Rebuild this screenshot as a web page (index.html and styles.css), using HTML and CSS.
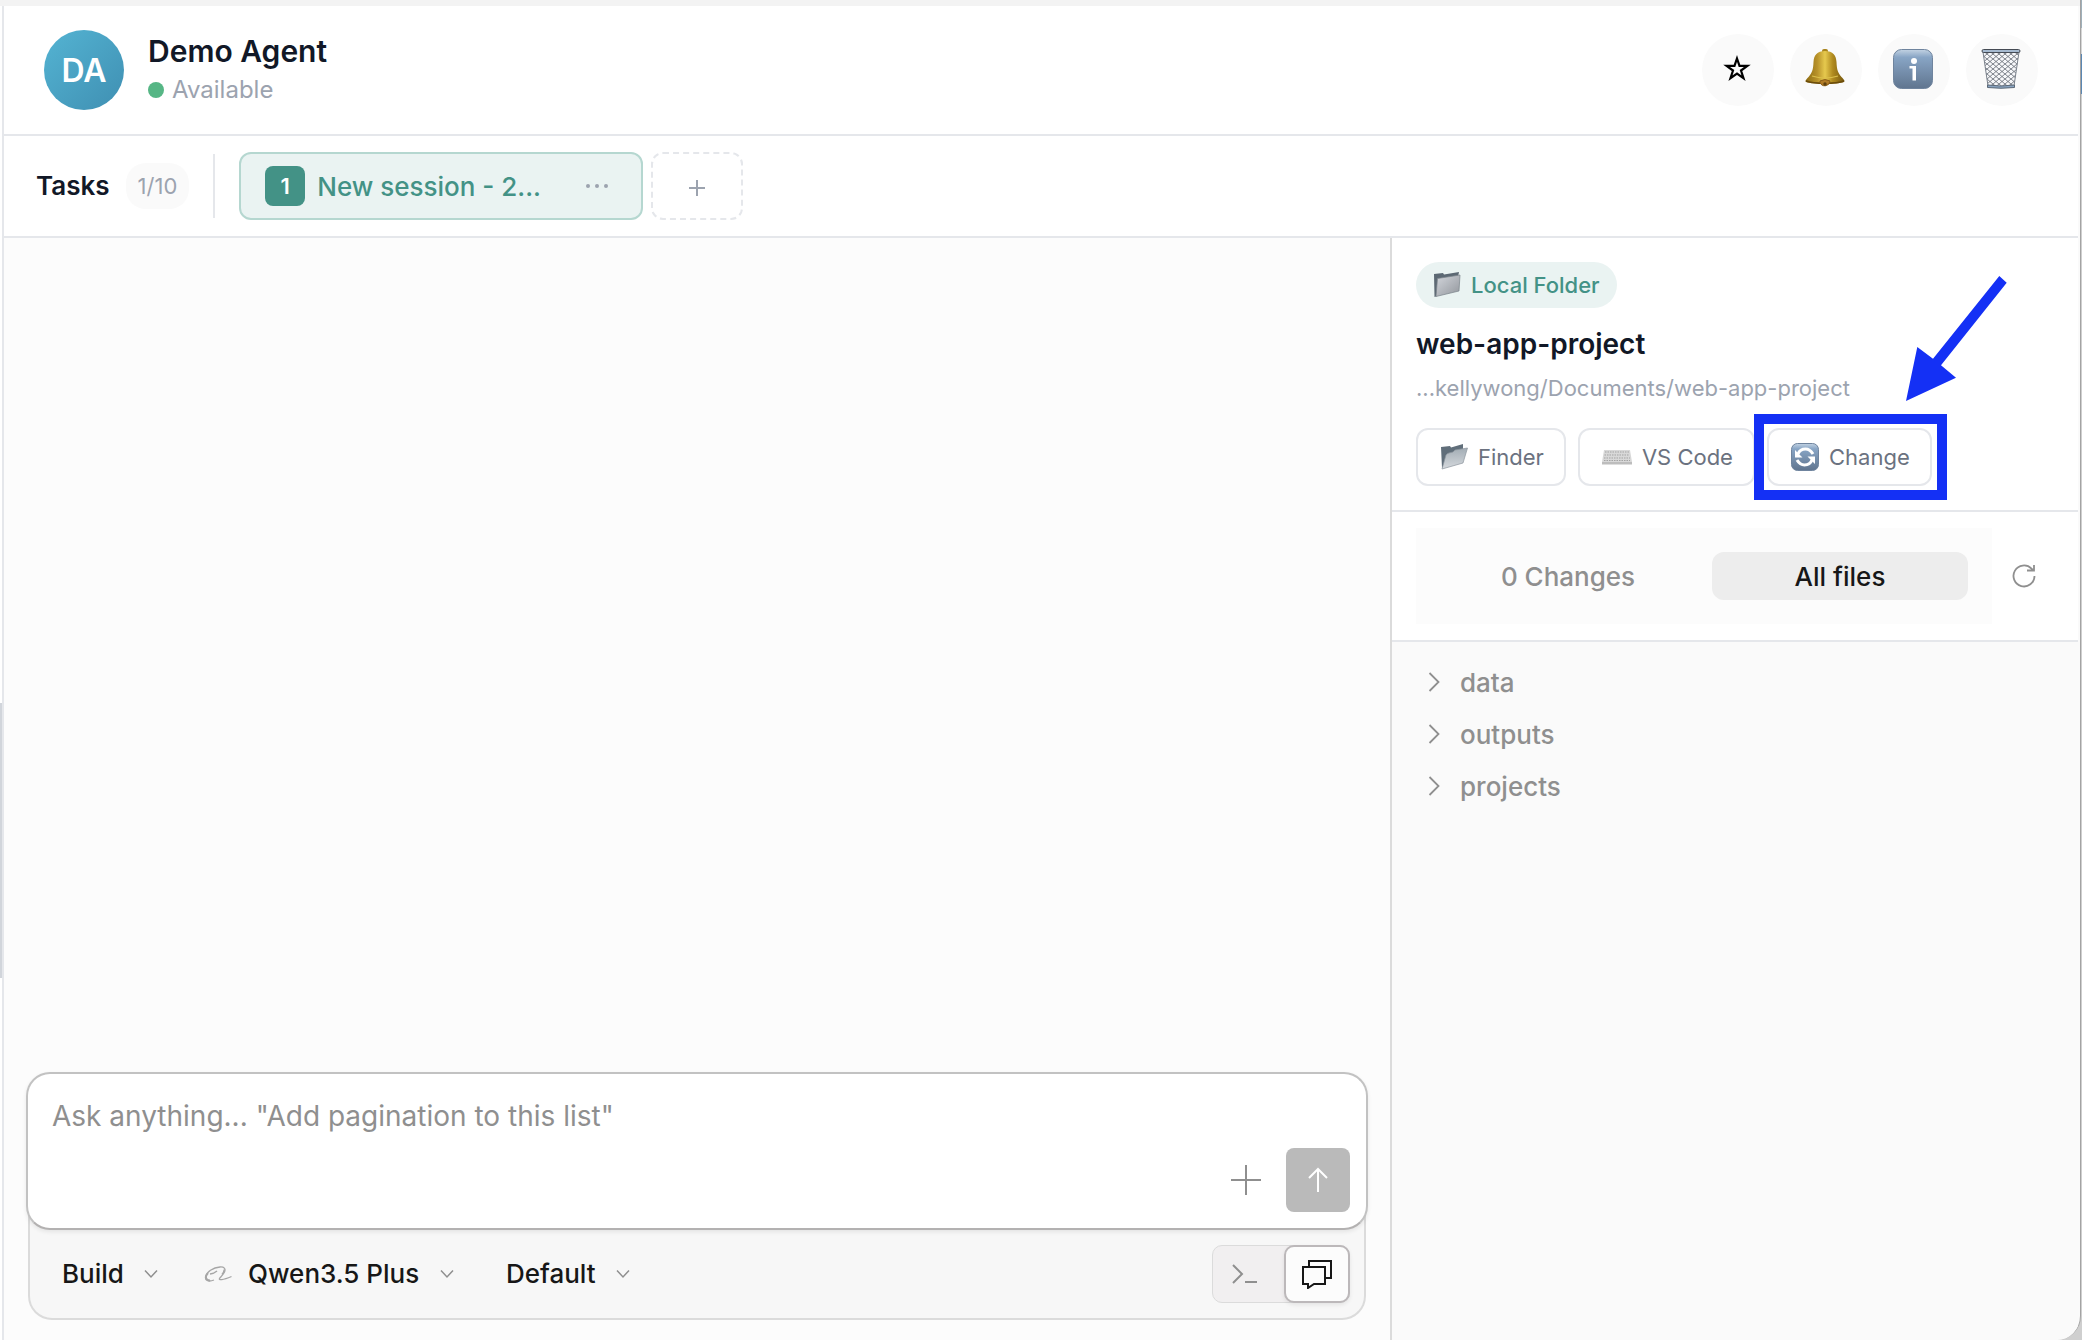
FILE: index.html
```html
<!DOCTYPE html>
<html lang="en">
<head>
    <meta charset="UTF-8">
    <meta name="viewport" content="width=device-width, initial-scale=1.0">
    <title>Demo Agent</title>
    <link rel="stylesheet" href="styles.css">
</head>
<body>
    <!-- shared icons -->
    <svg class="sprite" aria-hidden="true">
        <defs>
            <linearGradient id="steel" x1="0" y1="0" x2="0" y2="1">
                <stop offset="0" stop-color="#c3d3e3"/>
                <stop offset="0.2" stop-color="#88a5c5"/>
                <stop offset="1" stop-color="#60758f"/>
            </linearGradient>
            <linearGradient id="gold" x1="0" y1="0" x2="1" y2="0">
                <stop offset="0" stop-color="#8d6c12"/>
                <stop offset="0.3" stop-color="#b8922a"/>
                <stop offset="0.5" stop-color="#e6c94e"/>
                <stop offset="0.7" stop-color="#b08a1f"/>
                <stop offset="1" stop-color="#76570d"/>
            </linearGradient>
            <linearGradient id="folder-front" x1="0" y1="0" x2="1" y2="1">
                <stop offset="0" stop-color="#d3d6dc"/>
                <stop offset="1" stop-color="#92969c"/>
            </linearGradient>
            <linearGradient id="folder-open" x1="0" y1="0" x2="0" y2="1">
                <stop offset="0" stop-color="#a3adb5"/>
                <stop offset="1" stop-color="#d5d9dd"/>
            </linearGradient>
            <pattern id="mesh" width="6" height="5" patternUnits="userSpaceOnUse">
                <path d="M0 0l6 5M6 0L0 5" stroke="#5f6670" stroke-width="0.8"/>
            </pattern>
        </defs>
        <symbol id="chevron-down" viewBox="0 0 14 10">
            <path d="M1 1.500l6 6.500 6-6.500" fill="none" stroke="currentColor" stroke-width="1.500"/>
        </symbol>
        <symbol id="chevron-right" viewBox="0 0 12 20">
            <path d="M1.500 1l9 9-9 9" fill="none" stroke="currentColor" stroke-width="1.800"/>
        </symbol>
    </svg>

    <div class="window">
        <div class="titlebar"></div>
        <div class="layout">
            <aside class="agents"><div class="agents-thumb"></div></aside>

            <main class="main">
                <header class="header">
                    <div class="avatar">DA</div>
                    <div class="agent">
                        <h1 class="agent-name">Demo Agent</h1>
                        <p class="agent-status"><span class="status-dot"></span>Available</p>
                    </div>
                    <div class="header-actions">
                        <button class="icon-btn" aria-label="Favorite">
                            <svg width="28" height="28" viewBox="0 0 28 28"><path d="M14 3.500l2.500 7.300h7.900l-6.400 4.700 2.500 7.700-6.500-4.700-6.500 4.700 2.500-7.700-6.400-4.700h7.900z" fill="none" stroke="#000" stroke-width="2.200"/></svg>
                        </button>
                        <button class="icon-btn" aria-label="Notifications">
                            <svg width="40" height="40" viewBox="0 0 40 40">
                                <rect x="17" y="0" width="6" height="5" rx="2" fill="#a8831c"/>
                                <path d="M20 2c-8 0-11 4-11.500 11-.300 8-1.500 11-5 15-3 3-3.500 4-2.500 5 7 2.500 31 2.500 38 0 1-1 .500-2-2.500-5-3.500-4-4.700-7-5-15C31 6 28 2 20 2z" fill="url(#gold)"/>
                                <path d="M1 32c8 3 30 3 38 0" fill="none" stroke="#6b4c0b" stroke-width="1.500"/>
                                <path d="M7 27c8 2.500 18 2.500 26 0" fill="none" stroke="#dcbf4b" stroke-width="1.200"/>
                                <path d="M15 32q5-3 10 0a5.200 5.200 0 0 1-10 1.500z" fill="#b17b26" stroke="#8a5c16"/>
                                <circle cx="20" cy="35" r="1.700" fill="#5f400d"/>
                            </svg>
                        </button>
                        <button class="icon-btn" aria-label="Info">
                            <svg width="40" height="40" viewBox="0 0 40 40">
                                <rect x="0.500" y="0.500" width="39" height="39" rx="8" fill="url(#steel)" stroke="#6f849e"/>
                                <circle cx="21" cy="12" r="3" fill="#fff"/>
                                <path d="M16.500 17h6.500v12.500h0v2H19.500V19.500h-3z" fill="#fff"/>
                            </svg>
                        </button>
                        <button class="icon-btn" aria-label="Delete">
                            <svg width="40" height="40" viewBox="0 0 40 40">
                                <path d="M2 3h36l-5 34q-13 3-26 0z" fill="#f7f8fa"/>
                                <path d="M2 3h36l-5 34q-13 3-26 0z" fill="url(#mesh)" stroke="#7b828c"/>
                                <rect x="1" y="0.500" width="38" height="3" rx="1.500" fill="#a5b9cf" stroke="#454b54"/>
                                <path d="M6.500 36q13.500 2 27 0v2.500q-13.500 1.500-27 0z" fill="#8aa5c3" stroke="#5b6876"/>
                            </svg>
                        </button>
                    </div>
                </header>

                <nav class="tasks">
                    <h2 class="tasks-title">Tasks</h2>
                    <span class="tasks-count">1/10</span>
                    <div class="tasks-divider"></div>
                    <div class="task-list">
                        <div class="task">
                            <span class="task-number">1</span>
                            <span class="task-name">New session - 2...</span>
                            <button class="task-menu" aria-label="Task menu">
                                <svg width="24" height="6" viewBox="0 0 24 6" fill="currentColor"><circle cx="3" cy="3" r="2"/><circle cx="12" cy="3" r="2"/><circle cx="21" cy="3" r="2"/></svg>
                            </button>
                        </div>
                        <button class="task-add" aria-label="New task">
                            <svg width="16" height="16" viewBox="0 0 16 16"><path d="M8 0v16M0 8h16" stroke="currentColor" stroke-width="2"/></svg>
                        </button>
                    </div>
                </nav>

                <div class="workspace">
                    <section class="chat">
                        <div class="messages"></div>
                        <div class="composer">
                            <div class="prompt">
                                <textarea class="prompt-input" rows="1" aria-label="Message" placeholder="Ask anything... &quot;Add pagination to this list&quot;"></textarea>
                                <div class="prompt-actions">
                                    <button class="attach-btn" aria-label="Attach">
                                        <svg width="30" height="30" viewBox="0 0 30 30"><path d="M15 0v30M0 15h30" stroke="currentColor" stroke-width="2"/></svg>
                                    </button>
                                    <button class="send-btn" aria-label="Send">
                                        <svg width="22" height="26" viewBox="0 0 22 26"><path d="M11 25V2M2 11l9-9 9 9" fill="none" stroke="#fff" stroke-width="2"/></svg>
                                    </button>
                                </div>
                            </div>
                            <div class="toolbar">
                                <label class="picker">
                                    <select class="picker-select" aria-label="Mode"><option>Build</option></select>
                                    <svg class="picker-arrow" width="14" height="10"><use href="#chevron-down"/></svg>
                                </label>
                                <label class="picker">
                                    <svg class="picker-logo" width="28" height="16" viewBox="0 0 28 16" fill="none" stroke="#a6a6a6">
                                        <path d="M10 14C5 16 1 15 1.500 11 2.500 6 9 1.500 16 1c4-.300 6 1.500 4.500 5-1.500 3-4 5-5 6.500-1 1.800 3 1.800 12-2" stroke-width="1.300"/>
                                        <path d="M6 14.500C1 14.500 1 10 4 7" stroke-width="2"/>
                                        <path d="M6 8q4-.500 7-3M20 3.500q.500 2-2 5" stroke-width="1.500"/>
                                    </svg>
                                    <select class="picker-select" aria-label="Model"><option>Qwen3.5 Plus</option></select>
                                    <svg class="picker-arrow" width="14" height="10"><use href="#chevron-down"/></svg>
                                </label>
                                <label class="picker">
                                    <select class="picker-select" aria-label="Variant"><option>Default</option></select>
                                    <svg class="picker-arrow" width="14" height="10"><use href="#chevron-down"/></svg>
                                </label>
                                <div class="view-switch">
                                    <button class="view-btn" aria-label="Shell">
                                        <svg width="26" height="20" viewBox="0 0 26 20"><path d="M1 1l9 9-9 9M13 18h12" fill="none" stroke="currentColor" stroke-width="2"/></svg>
                                    </button>
                                    <button class="view-btn active" aria-label="Chat">
                                        <svg width="32" height="30" viewBox="0 0 32 30"><path d="M8 7V2h22v17h-6M2 8h22v17H13l-6 4v-4H2z" fill="none" stroke="currentColor" stroke-width="2"/></svg>
                                    </button>
                                </div>
                            </div>
                        </div>
                    </section>

                    <aside class="files">
                        <section class="project">
                            <span class="badge">
                                <svg width="28" height="28" viewBox="0 0 28 28">
                                    <path d="M1 3l9-1 1 1.500L26 1l-1 5L3 25.500 1.500 26z" fill="#5c6873"/>
                                    <path d="M4.500 7.500L27 4l-1 16L3 25.500z" fill="url(#folder-front)" stroke="#7a8289" stroke-width="0.700"/>
                                </svg>
                                Local Folder
                            </span>
                            <h2 class="project-name">web-app-project</h2>
                            <p class="project-path">...kellywong/Documents/web-app-project</p>
                            <div class="project-actions">
                                <button class="action-btn">
                                    <svg width="28" height="28" viewBox="0 0 28 28">
                                        <path d="M1 4l9-1 1 1.500L23 1v9L2 25z" fill="#606e7a"/>
                                        <path d="M6 12q1-1.500 3-2l4-1 2-2 12.500-2-4.500 15-21 6z" fill="url(#folder-open)" stroke="#8c959d" stroke-width="0.700"/>
                                    </svg>
                                    Finder
                                </button>
                                <button class="action-btn">
                                    <svg width="30" height="28" viewBox="0 0 30 28">
                                        <path d="M2 7h26l2 12v2H0v-2z" fill="#d8d8d8"/>
                                        <path d="M0 19h30v2.500H0z" fill="#bdbdbd"/>
                                        <path d="M3 9h24M2.500 12h25M2 15h26M2 17.500h26" stroke="#a3a3a3" stroke-dasharray="1.500 1"/>
                                    </svg>
                                    VS Code
                                </button>
                                <span class="highlight">
                                    <button class="action-btn">
                                        <svg width="28" height="28" viewBox="0 0 28 28">
                                            <rect x="0.500" y="0.500" width="27" height="27" rx="6" fill="url(#steel)" stroke="#6f849e"/>
                                            <path d="M7 11q2-5 7.500-5 4.500 0 7.500 5M21 17q-2 5-7.500 5-4.500 0-7.500-5" fill="none" stroke="#fff" stroke-width="3"/>
                                            <path d="M4 7v7.500h7.500zM24 21v-7.500h-7.500z" fill="#fff"/>
                                        </svg>
                                        Change
                                    </button>
                                    <svg class="highlight-arrow" width="102" height="126" viewBox="0 0 102 126"><path d="M93.300 0l7.400 6.700L35 89.300l15 12.400L0 125l11.300-54L27 82.700z" fill="#1430f5"/></svg>
                                </span>
                            </div>
                        </section>

                        <div class="file-tabs">
                            <div class="tab-group" role="tablist">
                                <button class="file-tab" role="tab" aria-selected="false">0 Changes</button>
                                <button class="file-tab active" role="tab" aria-selected="true">All files</button>
                            </div>
                            <button class="refresh-btn" aria-label="Refresh">
                                <svg width="24" height="24" viewBox="0 0 24 24"><path d="M22.500 12a10.500 10.500 0 1 1-3-7.400L22 6.500M22 1v5.500h-7" fill="none" stroke="currentColor" stroke-width="1.800"/></svg>
                            </button>
                        </div>

                        <ul class="tree">
                            <li><button class="tree-item"><svg width="12" height="20"><use href="#chevron-right"/></svg>data</button></li>
                            <li><button class="tree-item"><svg width="12" height="20"><use href="#chevron-right"/></svg>outputs</button></li>
                            <li><button class="tree-item"><svg width="12" height="20"><use href="#chevron-right"/></svg>projects</button></li>
                        </ul>
                    </aside>
                </div>
            </main>
        </div>
    </div>
</body>
</html>
```
FILE: styles.css
```css
* {
    box-sizing: border-box;
}
body {
    margin: 0;
    min-height: 100vh;
    display: flex;
    font-family: Inter, sans-serif;
    color: #111827;
    background: linear-gradient(#9fb0ba 28px, #d6d6d6 28px 54px, #5b87b3 54px 94px, #cfcfcf 94px);
}
h1, h2, p, ul {
    margin: 0;
    padding: 0;
}
ul {
    list-style: none;
}
button, select, textarea {
    font-family: inherit;
    color: inherit;
    padding: 0;
    border: none;
    background: none;
}
button {
    display: flex;
    align-items: center;
    justify-content: center;
    cursor: pointer;
}
svg {
    flex: none;
}
.sprite {
    position: absolute;
    width: 0;
    height: 0;
}

/* window frame */
.window {
    flex: 1;
    min-width: 0;
    display: flex;
    flex-direction: column;
    margin-right: 1px;
    border-right: 1px solid #a3a3a3;
    border-bottom-right-radius: 24px;
    background: #fafafa;
    overflow: hidden;
}
.titlebar {
    height: 6px;
    background: #f3f3f3;
}
.layout {
    flex: 1;
    display: flex;
    padding-right: 2px;
}
.agents {
    width: 4px;
    border-right: 2px solid #e5e7eb;
    background: #fff;
    padding-top: 697px;
}
.agents-thumb {
    height: 275px;
    background: #d1d5db;
}
.main {
    flex: 1;
    min-width: 0;
    display: flex;
    flex-direction: column;
}

/* header */
.header {
    display: flex;
    align-items: center;
    gap: 24px;
    padding: 24px 40px;
    background: #fff;
    border-bottom: 2px solid #e5e7eb;
}
.avatar {
    width: 80px;
    height: 80px;
    border-radius: 50%;
    display: flex;
    align-items: center;
    justify-content: center;
    background: linear-gradient(135deg, #54b4d3, #3f8fb2);
    color: #fff;
    font-size: 32px;
    font-weight: 600;
}
.agent {
    flex: 1;
}
.agent-name {
    font-size: 30px;
    line-height: 38px;
    font-weight: 600;
}
.agent-status {
    display: flex;
    align-items: center;
    gap: 8px;
    padding-top: 1px;
    font-size: 24px;
    line-height: 38px;
    color: #9ca3af;
}
.status-dot {
    width: 16px;
    height: 16px;
    border-radius: 50%;
    background: #56b685;
}
.header-actions {
    display: flex;
    gap: 16px;
}
.icon-btn {
    width: 72px;
    height: 72px;
    padding: 0 2px 2px 0;
    border-radius: 50%;
    background: #fafafa;
}

/* task tabs */
.tasks {
    display: flex;
    align-items: center;
    padding: 16px 32px;
    background: #fff;
    border-bottom: 2px solid #e5e7eb;
}
.tasks-title {
    font-size: 26px;
    line-height: 32px;
    font-weight: 600;
}
.tasks-count {
    margin-left: 16px;
    padding: 8px 12px;
    border-radius: 20px;
    background: #fafafa;
    color: #9ca3af;
    font-size: 22px;
    line-height: 30px;
}
.tasks-divider {
    width: 2px;
    height: 64px;
    margin: 0 24px;
    background: #e5e7eb;
}
.task-list {
    display: flex;
    gap: 8px;
}
.task {
    display: flex;
    align-items: center;
    gap: 12px;
    width: 404px;
    height: 68px;
    padding: 0 24px;
    border: 2px solid #b5d7d0;
    border-radius: 12px;
    background: #eaf3f2;
    color: #439286;
}
.task-number {
    width: 40px;
    height: 40px;
    border-radius: 8px;
    background: #439286;
    color: #fff;
    font-size: 22px;
    line-height: 40px;
    font-weight: 600;
    text-align: center;
}
.task-name {
    flex: 1;
    font-size: 26px;
    font-weight: 500;
    white-space: nowrap;
}
.task-menu {
    width: 40px;
    height: 40px;
    color: #9ca3af;
}
.task-add {
    width: 92px;
    height: 68px;
    padding-top: 4px;
    border: 2px dashed #e5e7eb;
    border-radius: 12px;
    color: #9ca3af;
}

/* chat */
.workspace {
    flex: 1;
    display: flex;
}
.chat {
    flex: 1;
    min-width: 0;
    display: flex;
    flex-direction: column;
    padding: 0 22px 20px;
    background: #fcfcfc;
}
.messages {
    flex: 1;
}
.prompt {
    position: relative;
    display: flex;
    flex-direction: column;
    padding: 22px 16px 16px 24px;
    border: 2px solid #c2c2c2;
    border-bottom-color: #b3b1b1;
    border-radius: 24px;
    background: #fff;
    box-shadow: 0 2px 4px rgba(0, 0, 0, 0.08);
}
.prompt-input {
    height: 40px;
    font-size: 28px;
    line-height: 40px;
    resize: none;
    outline: none;
}
.prompt-input::placeholder {
    color: #8f8f8f;
}
.prompt-actions {
    display: flex;
    justify-content: flex-end;
    gap: 8px;
    margin-top: 12px;
}
.attach-btn,
.send-btn {
    width: 64px;
    height: 64px;
    border-radius: 8px;
    color: #8f8f8f;
}
.send-btn {
    background: #bababa;
}
.toolbar {
    display: flex;
    align-items: center;
    gap: 52px;
    margin: -24px 2px 0;
    padding: 39px 14px 15px 32px;
    border: 2px solid #dbdbdb;
    border-top: none;
    border-radius: 0 0 24px 24px;
    background: #f7f7f7;
}
.picker {
    display: flex;
    align-items: center;
    color: #8f8f8f;
}
.picker-logo {
    margin: 0 16px 0 -6px;
}
.picker-select {
    appearance: none;
    color: #171717;
    font-size: 26px;
    line-height: 36px;
    font-weight: 500;
    outline: none;
}
.picker-arrow {
    margin-left: 20px;
}
.view-switch {
    display: flex;
    justify-content: space-between;
    width: 138px;
    height: 58px;
    margin-left: auto;
    border: 1px solid #dbdbdb;
    border-radius: 10px;
    background: #f1eff0;
}
.view-btn {
    width: 66px;
    height: 58px;
    margin: -1px;
    border-radius: 10px;
    color: #8f8f8f;
}
.view-btn.active {
    border: 2px solid #bcb8ba;
    background: #fcfcfc;
    color: #171717;
    box-shadow: 0 2px 4px rgba(0, 0, 0, 0.08);
}

/* file panel */
.files {
    flex: 0 0 688px;
    border-left: 2px solid #dbdbdb;
    background: #fafafa;
}
.project {
    padding: 24px;
    background: #fff;
    border-bottom: 2px solid #e5e7eb;
}
.badge {
    display: inline-flex;
    align-items: center;
    gap: 10px;
    height: 46px;
    padding: 0 17px;
    border-radius: 23px;
    background: #eaf3f2;
    color: #439286;
    font-size: 22px;
    font-weight: 500;
}
.project-name {
    margin-top: 16px;
    font-size: 28px;
    line-height: 40px;
    font-weight: 600;
}
.project-path {
    margin-top: 8px;
    color: #9ca3af;
    font-size: 22px;
    line-height: 32px;
}
.project-actions {
    display: flex;
    gap: 12px;
    margin-top: 24px;
}
.action-btn {
    gap: 10px;
    height: 58px;
    padding: 0 20px 0 22px;
    border: 2px solid #e5e7eb;
    border-radius: 12px;
    background: #fff;
    color: #6b7280;
    font-size: 22px;
    white-space: nowrap;
}

/* callout around the Change button */
.highlight {
    position: relative;
}
.highlight::before {
    content: "";
    position: absolute;
    inset: -14px -15px -14px -13px;
    border: 10px solid #1430f5;
    pointer-events: none;
}
.highlight-arrow {
    position: absolute;
    right: -76px;
    bottom: 84px;
}

.file-tabs {
    display: flex;
    align-items: center;
    gap: 8px;
    padding: 16px 30px 16px 24px;
    background: #fff;
    border-bottom: 2px solid #e5e7eb;
}
.tab-group {
    flex: 1;
    display: flex;
    gap: 16px;
    padding: 24px;
    background: #fcfcfc;
}
.file-tab {
    flex: 1;
    height: 48px;
    border-radius: 12px;
    color: #8f8f8f;
    font-size: 26px;
    font-weight: 500;
}
.file-tab.active {
    background: #ededed;
    color: #171717;
}
.refresh-btn {
    width: 48px;
    height: 48px;
    color: #8f8f8f;
}
.tree {
    padding: 14px 24px;
}
.tree-item {
    gap: 20px;
    height: 52px;
    padding: 0 12px;
    color: #8f8f8f;
    font-size: 26px;
    font-weight: 500;
}
```
